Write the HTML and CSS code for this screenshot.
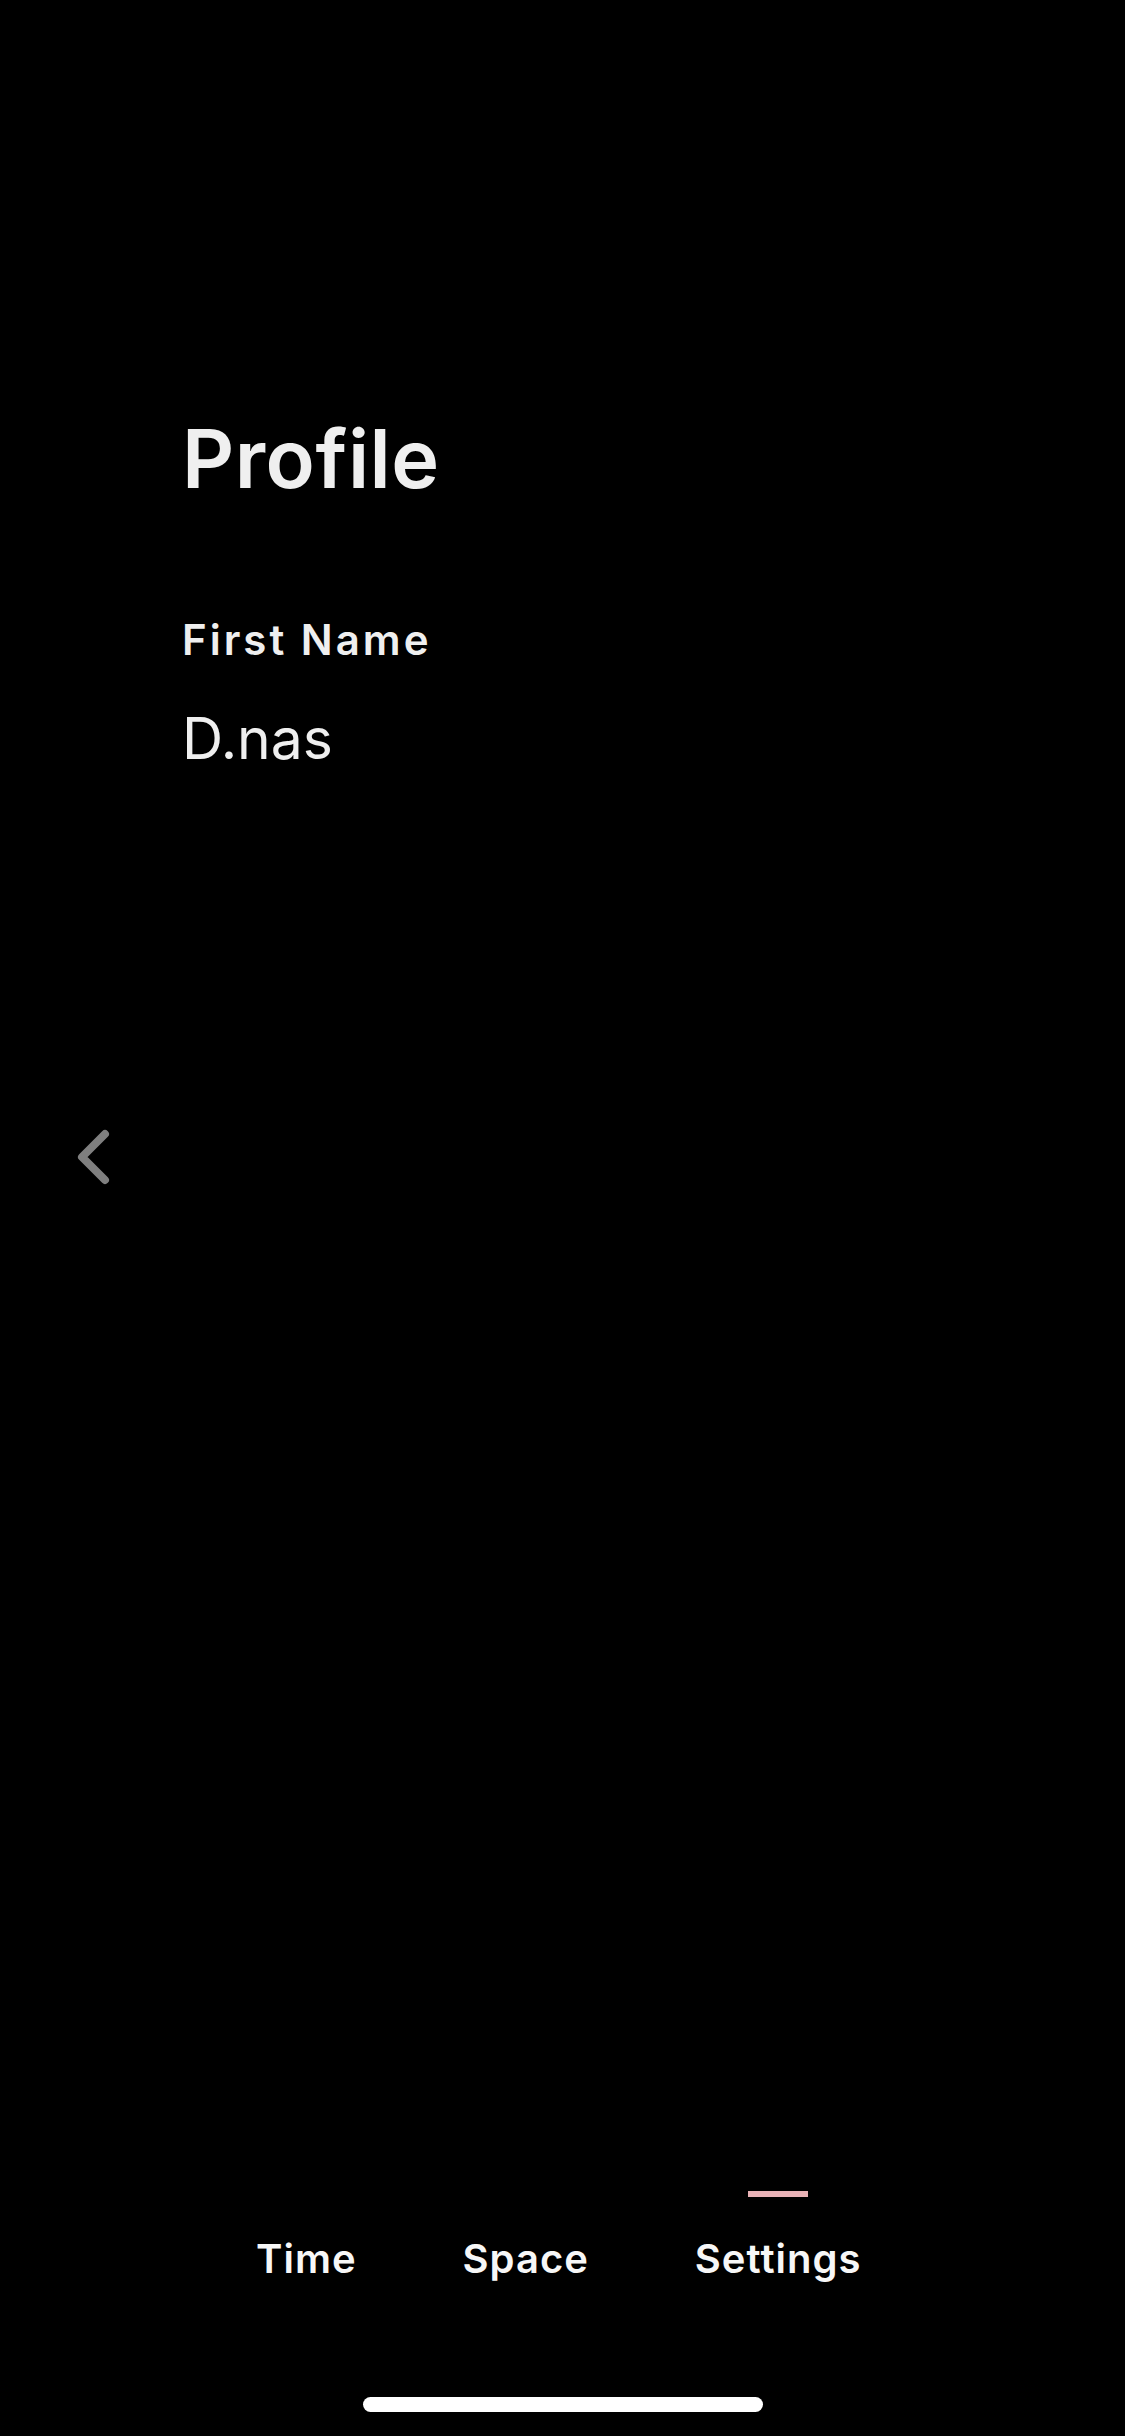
FILE: index.html
```html
<!DOCTYPE html>
<html lang="en">
<head>
    <meta charset="UTF-8">
    <meta name="viewport" content="width=device-width, initial-scale=1.0">
    <title>Profile</title>
    <link rel="stylesheet" href="styles.css">
</head>
<body>
    <div class="screen">
        <div class="content">
            <h1 class="title">Profile</h1>
            <div class="field">
                <div class="field-label">First Name</div>
                <div class="field-value">D.nas</div>
            </div>
        </div>

        <button class="back-btn" aria-label="Back">
            <svg width="40" height="64" viewBox="0 0 40 64">
                <polyline points="31,10 8,33 31,56" fill="none" stroke="#7f7f7f" stroke-width="8" stroke-linecap="round" stroke-linejoin="round"/>
            </svg>
        </button>

        <nav class="tabbar">
            <div class="tab">Time</div>
            <div class="tab">Space</div>
            <div class="tab active">Settings</div>
        </nav>

        <div class="home-indicator"></div>
    </div>
</body>
</html>
```

FILE: styles.css
```css
body {
    margin: 0;
    background: #000;
    font-family: Inter, "Noto Sans", sans-serif;
    color: #efefef;
}
.screen {
    position: relative;
    height: 2436px;
    display: flex;
    flex-direction: column;
    overflow: hidden;
}
.content {
    padding: 419px 0 0 182px;
}
.title {
    margin: 0;
    font-size: 81px;
    line-height: 1;
    font-weight: 600;
    letter-spacing: 0.5px;
}
.field {
    margin-top: 119px;
}
.field-label {
    font-size: 42px;
    line-height: 1;
    font-weight: 600;
    letter-spacing: 3px;
}
.field-value {
    margin-top: 49px;
    font-size: 57px;
    line-height: 1;
    font-weight: 400;
}
.back-btn {
    position: absolute;
    left: 74px;
    top: 1124px;
    padding: 0;
    border: none;
    background: none;
    cursor: pointer;
}
.tabbar {
    margin-top: auto;
    display: flex;
    gap: 106px;
    padding-left: 256px;
}
.tab {
    position: relative;
    padding-top: 48px;
    font-size: 40px;
    line-height: 1;
    font-weight: 600;
    letter-spacing: 1px;
    color: #f7f7f7;
}
.tab.active::before {
    content: "";
    position: absolute;
    top: 0;
    left: 50%;
    width: 60px;
    height: 6px;
    margin-left: -30px;
    background: #e9b2b6;
}
.home-indicator {
    align-self: center;
    width: 400px;
    height: 15px;
    margin: 118px 0 24px;
    border-radius: 8px;
    background: #fff;
}
```
